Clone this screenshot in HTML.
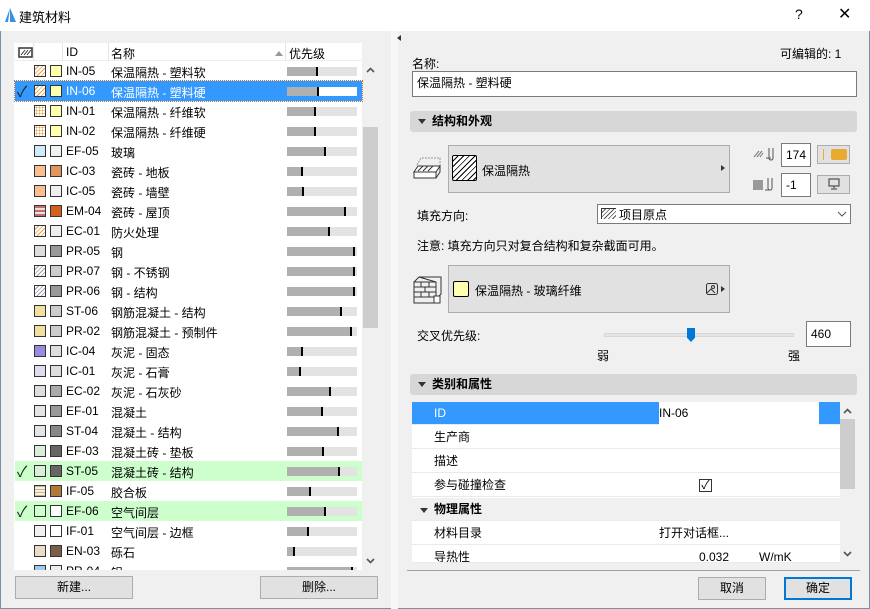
<!DOCTYPE html>
<html><head><meta charset="utf-8"><style>
*{box-sizing:border-box;margin:0;padding:0}
body{width:870px;height:609px;overflow:hidden;background:#f0f0f0;font-family:"Liberation Sans","Noto Sans CJK SC",sans-serif;font-size:12px;color:#000;position:relative}
.a{position:absolute}
.win{position:absolute;left:0;top:0;width:870px;height:609px;border:1px solid #7a8ea8;}
.row{position:absolute;left:15px;width:347px;height:20px}
.row span{position:absolute;top:3px;white-space:nowrap}
.s1,.s2{position:absolute;top:4px;width:12px;height:12px;border:1px solid #333}
.s1{left:19px}.s2{left:35px}
.bar{position:absolute;left:272px;top:6px;width:70px;height:9px;background:#e3e3e3}
.bar i{position:absolute;left:0;top:0;height:9px;background:#b0b0b0;border-right:2px solid #000}
.ck{left:2px;font-size:15px;top:0!important;color:#222}
.btn{position:absolute;background:#e1e1e1;border:1px solid #adadad;text-align:center;line-height:20px}
.hdr{position:absolute;left:410px;width:447px;height:21px;background:#d7d7d7;border-radius:3px;font-weight:bold;line-height:21px;padding-left:22px}
.hdr:before{content:"";position:absolute;left:8px;top:8px;border:4px solid transparent;border-top:5px solid #333}
.inp{position:absolute;background:#fff;border:1px solid #7a7a7a;line-height:22px;padding-left:4px}
.pr{position:absolute;left:412px;width:428px;height:23px;background:#fff;border-bottom:1px solid #eaeaea;line-height:23px}
.pr span{position:absolute}
</style></head><body>
<div class="win"></div>
<div class="a" style="left:0;top:0;width:870px;height:31px;background:#fff"></div>
<svg class="a" style="left:5px;top:8px" width="12" height="14"><path d="M5 0 L0 14 L11 14 Z" fill="#3a8ee6"/><path d="M5 0 L3 14 L5 14 Z" fill="#fff"/></svg>
<div class="a" style="left:19px;top:7px;font-size:13px">建筑材料</div>
<div class="a" style="left:795px;top:6px;font-size:14px">?</div>
<div class="a" style="left:838px;top:4px;font-size:16px">✕</div>
<div class="a" style="left:391px;top:31px;width:7px;height:578px;background:#f7f7f7"></div>
<div class="a" style="left:394px;top:35px;border:3px solid transparent;border-right:4px solid #333;width:0;height:0"></div>
<!-- list -->
<div class="a" style="left:14px;top:43px;width:348px;height:527px;background:#fff"></div>
<div class="a" style="left:14px;top:43px;width:348px;height:18px;background:#fff;border-bottom:1px solid #eee"></div>
<svg class="a" style="left:18px;top:47px" width="15" height="11"><rect x="1" y="1" width="13" height="9" fill="none" stroke="#333" stroke-width="1.5"/><path d="M3 8 L7 3 M6 8 L10 3 M9 8 L13 3" stroke="#333"/></svg>
<div class="a" style="left:33px;top:43px;width:1px;height:18px;background:#e5e5e5"></div>
<div class="a" style="left:62px;top:43px;width:1px;height:18px;background:#e5e5e5"></div>
<div class="a" style="left:108px;top:43px;width:1px;height:18px;background:#e5e5e5"></div>
<div class="a" style="left:285px;top:43px;width:1px;height:18px;background:#e5e5e5"></div>
<div class="a" style="left:66px;top:45px">ID</div>
<div class="a" style="left:111px;top:45px">名称</div>
<div class="a" style="left:275px;top:51px;border:4px solid transparent;border-bottom:5px solid #999;border-top:0"></div>
<div class="a" style="left:289px;top:45px">优先级</div>
<div class="a" style="left:363px;top:61px;width:15px;height:509px;background:#f0f0f0"></div>
<div class="a" style="left:363px;top:127px;width:15px;height:201px;background:#cdcdcd"></div>
<svg class="a" style="left:366px;top:67px" width="9" height="6"><path d="M1 5 L4.5 1.5 L8 5" fill="none" stroke="#555" stroke-width="1.6"/></svg>
<svg class="a" style="left:366px;top:558px" width="9" height="6"><path d="M1 1 L4.5 4.5 L8 1" fill="none" stroke="#555" stroke-width="1.6"/></svg>

<div class="row" style="top:61px"><div class="s1" style="background:repeating-linear-gradient(135deg,#fff 0 2px,#e8a040 2px 3px)"></div><div class="s2" style="background:#ffffb0"></div><span style="left:51px">IN-05</span><span style="left:96px">保温隔热 - 塑料软</span><div class="bar"><i style="width:31px"></i></div></div>
<div class="row" style="top:81px;background:#3399ff;color:#fff;outline:1px dotted #c07030"><span class="ck" style="color:#222">✓</span><div class="s1" style="background:repeating-linear-gradient(135deg,#fff 0 2px,#e8a040 2px 3px)"></div><div class="s2" style="background:#ffffb0"></div><span style="left:51px">IN-06</span><span style="left:96px">保温隔热 - 塑料硬</span><div class="bar" style="background:#fff"><i style="width:32px"></i></div></div>
<div class="row" style="top:101px"><div class="s1" style="background:radial-gradient(#e8a040 40%,#fff 45%) 0 0/3px 3px"></div><div class="s2" style="background:#ffffb0"></div><span style="left:51px">IN-01</span><span style="left:96px">保温隔热 - 纤维软</span><div class="bar"><i style="width:29px"></i></div></div>
<div class="row" style="top:121px"><div class="s1" style="background:radial-gradient(#e8a040 40%,#fff 45%) 0 0/3px 3px"></div><div class="s2" style="background:#ffffb0"></div><span style="left:51px">IN-02</span><span style="left:96px">保温隔热 - 纤维硬</span><div class="bar"><i style="width:29px"></i></div></div>
<div class="row" style="top:141px"><div class="s1" style="background:#cfeaf8"></div><div class="s2" style="background:#eef2ee"></div><span style="left:51px">EF-05</span><span style="left:96px">玻璃</span><div class="bar"><i style="width:39px"></i></div></div>
<div class="row" style="top:161px"><div class="s1" style="background:#f8c090"></div><div class="s2" style="background:#e0965e"></div><span style="left:51px">IC-03</span><span style="left:96px">瓷砖 - 地板</span><div class="bar"><i style="width:16px"></i></div></div>
<div class="row" style="top:181px"><div class="s1" style="background:#f8c090"></div><div class="s2" style="background:#eee"></div><span style="left:51px">IC-05</span><span style="left:96px">瓷砖 - 墙壁</span><div class="bar"><i style="width:17px"></i></div></div>
<div class="row" style="top:201px"><div class="s1" style="background:repeating-linear-gradient(0deg,#c07070 0 2px,#f0dede 2px 4px)"></div><div class="s2" style="background:#d2601f"></div><span style="left:51px">EM-04</span><span style="left:96px">瓷砖 - 屋顶</span><div class="bar"><i style="width:59px"></i></div></div>
<div class="row" style="top:221px"><div class="s1" style="background:repeating-linear-gradient(135deg,#fff 0 2px,#e8a040 2px 3px)"></div><div class="s2" style="background:#eee"></div><span style="left:51px">EC-01</span><span style="left:96px">防火处理</span><div class="bar"><i style="width:43px"></i></div></div>
<div class="row" style="top:241px"><div class="s1" style="background:#ddd"></div><div class="s2" style="background:#999"></div><span style="left:51px">PR-05</span><span style="left:96px">钢</span><div class="bar"><i style="width:68px"></i></div></div>
<div class="row" style="top:261px"><div class="s1" style="background:repeating-linear-gradient(135deg,#fff 0 2px,#99a 2px 3px)"></div><div class="s2" style="background:#ccc"></div><span style="left:51px">PR-07</span><span style="left:96px">钢 - 不锈钢</span><div class="bar"><i style="width:68px"></i></div></div>
<div class="row" style="top:281px"><div class="s1" style="background:repeating-linear-gradient(135deg,#fff 0 2px,#99a 2px 3px)"></div><div class="s2" style="background:#999"></div><span style="left:51px">PR-06</span><span style="left:96px">钢 - 结构</span><div class="bar"><i style="width:68px"></i></div></div>
<div class="row" style="top:301px"><div class="s1" style="background:#f0e0a0"></div><div class="s2" style="background:#ccc"></div><span style="left:51px">ST-06</span><span style="left:96px">钢筋混凝土 - 结构</span><div class="bar"><i style="width:55px"></i></div></div>
<div class="row" style="top:321px"><div class="s1" style="background:#f0e0a0"></div><div class="s2" style="background:#ccc"></div><span style="left:51px">PR-02</span><span style="left:96px">钢筋混凝土 - 预制件</span><div class="bar"><i style="width:65px"></i></div></div>
<div class="row" style="top:341px"><div class="s1" style="background:#9a8ae0"></div><div class="s2" style="background:#ddd"></div><span style="left:51px">IC-04</span><span style="left:96px">灰泥 - 固态</span><div class="bar"><i style="width:16px"></i></div></div>
<div class="row" style="top:361px"><div class="s1" style="background:#dde"></div><div class="s2" style="background:#ddd"></div><span style="left:51px">IC-01</span><span style="left:96px">灰泥 - 石膏</span><div class="bar"><i style="width:14px"></i></div></div>
<div class="row" style="top:381px"><div class="s1" style="background:#ddd"></div><div class="s2" style="background:#aaa"></div><span style="left:51px">EC-02</span><span style="left:96px">灰泥 - 石灰砂</span><div class="bar"><i style="width:44px"></i></div></div>
<div class="row" style="top:401px"><div class="s1" style="background:#e4e4e4"></div><div class="s2" style="background:#999"></div><span style="left:51px">EF-01</span><span style="left:96px">混凝土</span><div class="bar"><i style="width:36px"></i></div></div>
<div class="row" style="top:421px"><div class="s1" style="background:#e4e4e4"></div><div class="s2" style="background:#888"></div><span style="left:51px">ST-04</span><span style="left:96px">混凝土 - 结构</span><div class="bar"><i style="width:52px"></i></div></div>
<div class="row" style="top:441px"><div class="s1" style="background:#d8eed8"></div><div class="s2" style="background:#666"></div><span style="left:51px">EF-03</span><span style="left:96px">混凝土砖 - 垫板</span><div class="bar"><i style="width:37px"></i></div></div>
<div class="row" style="top:461px;background:#ccffcc"><span class="ck">✓</span><div class="s1" style="background:#d8eed8"></div><div class="s2" style="background:#666"></div><span style="left:51px">ST-05</span><span style="left:96px">混凝土砖 - 结构</span><div class="bar"><i style="width:53px"></i></div></div>
<div class="row" style="top:481px"><div class="s1" style="background:repeating-linear-gradient(0deg,#c8b890 0 1px,#f4efe0 1px 3px)"></div><div class="s2" style="background:#b07a3a"></div><span style="left:51px">IF-05</span><span style="left:96px">胶合板</span><div class="bar"><i style="width:24px"></i></div></div>
<div class="row" style="top:501px;background:#ccffcc"><span class="ck">✓</span><div class="s1" style="background:#ccffcc"></div><div class="s2" style="background:#fff"></div><span style="left:51px">EF-06</span><span style="left:96px">空气间层</span><div class="bar"><i style="width:39px"></i></div></div>
<div class="row" style="top:521px"><div class="s1" style="background:#f0f0f0"></div><div class="s2" style="background:#fff"></div><span style="left:51px">IF-01</span><span style="left:96px">空气间层 - 边框</span><div class="bar"><i style="width:22px"></i></div></div>
<div class="row" style="top:541px"><div class="s1" style="background:#e8dcc8"></div><div class="s2" style="background:#7a5e45"></div><span style="left:51px">EN-03</span><span style="left:96px">砾石</span><div class="bar"><i style="width:8px"></i></div></div>
<div class="row" style="top:561px;height:9px;overflow:hidden"><div class="s1" style="background:#a0c8f0"></div><div class="s2" style="background:#eee"></div><span style="left:51px">PR-04</span><span style="left:96px">铝</span><div class="bar"><i style="width:66px"></i></div></div>

<div class="btn" style="left:15px;top:576px;width:118px;height:23px">新建...</div>
<div class="btn" style="left:260px;top:576px;width:118px;height:23px">删除...</div>

<!-- right -->
<div class="a" style="left:412px;top:55px">名称:</div>
<div class="a" style="left:780px;top:45px">可编辑的: 1</div>
<div class="inp" style="left:412px;top:71px;width:445px;height:26px">保温隔热 - 塑料硬</div>
<div class="hdr" style="top:111px">结构和外观</div>
<svg class="a" style="left:413px;top:157px" width="28" height="26"><path d="M4 8 L8 1 L27 1 L27 10" fill="none" stroke="#999" stroke-dasharray="2 1"/><path d="M1 15 L5 9 L27 9 L23 15 Z" fill="#fff" stroke="#333"/><path d="M5 14 L10 9 M10 14 L15 9 M15 14 L20 9" stroke="#333"/><rect x="1" y="15" width="22" height="6" fill="#fff" stroke="#333"/><path d="M23 21 L27 15 L27 9" fill="none" stroke="#333"/></svg>
<div class="a" style="left:448px;top:145px;width:282px;height:48px;background:#e1e1e1;border:1px solid #adadad"></div>
<div class="a" style="left:452px;top:155px;width:25px;height:26px;border:1px solid #000;border-radius:2px;background:repeating-linear-gradient(135deg,#fff 0 3px,#000 3px 4px)"></div>
<div class="a" style="left:482px;top:162px">保温隔热</div>
<div class="a" style="left:721px;top:165px;border:3px solid transparent;border-left:4px solid #333"></div>
<svg class="a" style="left:753px;top:146px" width="24" height="16"><path d="M1 11 L6 5 M4 11 L9 5 M7 11 L10 7" stroke="#777"/><path d="M13 12 H18 M16 2 V12 Q16 14 18 14 Q20 14 20 12 V2" fill="none" stroke="#555"/></svg>
<div class="inp" style="left:781px;top:143px;width:30px;height:24px;line-height:22px">174</div>
<div class="a" style="left:817px;top:145px;width:33px;height:19px;background:#e1e1e1;border:1px solid #adadad"></div>
<div class="a" style="left:831px;top:149px;width:16px;height:11px;background:#e8aa30;border-radius:2px"></div>
<div class="a" style="left:823px;top:149px;width:1px;height:11px;background:#e8aa30"></div>
<div class="a" style="left:753px;top:180px;width:10px;height:10px;background:#999"></div>
<svg class="a" style="left:765px;top:176px" width="10" height="16"><path d="M0 14 H6 M3 2 V12 Q3 14 5 14 Q7 14 7 12 V2" fill="none" stroke="#555"/></svg>
<div class="inp" style="left:781px;top:173px;width:30px;height:24px;line-height:22px">-1</div>
<div class="a" style="left:817px;top:175px;width:33px;height:19px;background:#e1e1e1;border:1px solid #adadad"></div>
<svg class="a" style="left:828px;top:178px" width="12" height="12"><rect x="1" y="1" width="10" height="7" fill="none" stroke="#333"/><path d="M6 8 V10 M3 11 H9" stroke="#333"/></svg>
<div class="a" style="left:417px;top:207px">填充方向:</div>
<div class="a" style="left:597px;top:204px;width:254px;height:20px;background:#fff;border:1px solid #7a7a7a"></div>
<div class="a" style="left:601px;top:208px;width:15px;height:11px;border-left:1px solid #333;border-top:1px solid #333;background:repeating-linear-gradient(135deg,#fff 0 2px,#555 2px 3px)"></div>
<div class="a" style="left:619px;top:206px">项目原点</div>
<svg class="a" style="left:837px;top:211px" width="10" height="6"><path d="M1 1 L5 5 L9 1" fill="none" stroke="#555"/></svg>
<div class="a" style="left:417px;top:237px">注意: 填充方向只对复合结构和复杂截面可用。</div>
<svg class="a" style="left:413px;top:276px" width="30" height="28"><path d="M1 6 L6 1 L28 1 L28 18 L23 23" fill="none" stroke="#333"/><rect x="1" y="6" width="22" height="21" fill="none" stroke="#333"/><path d="M1 11 H23 M1 16 H23 M1 21 H23 M8 6 V11 M16 6 V11 M12 11 V16 M8 16 V21 M16 16 V21 M6 1 L23 6" stroke="#333" fill="none"/><rect x="21" y="20" width="6" height="7" fill="#fff" stroke="#333"/></svg>
<div class="a" style="left:448px;top:265px;width:282px;height:48px;background:#e1e1e1;border:1px solid #adadad"></div>
<div class="a" style="left:453px;top:281px;width:16px;height:16px;background:#ffffb0;border:1px solid #000;border-radius:2px"></div>
<div class="a" style="left:475px;top:282px">保温隔热 - 玻璃纤维</div>
<svg class="a" style="left:706px;top:283px" width="12" height="12"><rect x="0.5" y="0.5" width="11" height="11" rx="2" fill="none" stroke="#333"/><circle cx="7" cy="4" r="1.5" fill="none" stroke="#333"/><path d="M1 10 L5 6 L9 10" fill="none" stroke="#333"/></svg>
<div class="a" style="left:721px;top:286px;border:3px solid transparent;border-left:4px solid #333"></div>
<div class="a" style="left:417px;top:327px">交叉优先级:</div>
<div class="a" style="left:604px;top:333px;width:190px;height:4px;background:#e6e6e6;border:1px solid #d6d6d6"></div>
<div class="a" style="left:687px;top:328px;width:8px;height:14px;background:#0078d7;clip-path:polygon(0 0,100% 0,100% 70%,50% 100%,0 70%)"></div>
<div class="inp" style="left:806px;top:321px;width:45px;height:26px;line-height:24px">460</div>
<div class="a" style="left:597px;top:347px">弱</div>
<div class="a" style="left:788px;top:347px">强</div>
<div class="hdr" style="top:374px">类别和属性</div>
<div class="a" style="left:412px;top:402px;width:428px;height:161px;background:#fff;overflow:hidden"></div>
<div class="pr" style="top:402px;background:#3399ff;color:#fff"><span style="left:22px">ID</span><span style="left:247px;top:0;width:160px;height:23px;background:#fff;color:#000">IN-06</span></div>
<div class="pr" style="top:426px"><span style="left:22px">生产商</span></div>
<div class="pr" style="top:450px"><span style="left:22px">描述</span></div>
<div class="pr" style="top:474px"><span style="left:22px">参与碰撞检查</span><span style="left:287px;top:5px;width:13px;height:13px;border:1px solid #333;line-height:11px;font-size:12px;text-align:center">✓</span></div>
<div class="pr" style="top:498px;background:#f0f0f0;font-weight:bold"><span style="left:22px">物理属性</span><span style="left:8px;top:10px;border:4px solid transparent;border-top:5px solid #333"></span></div>
<div class="pr" style="top:522px"><span style="left:22px">材料目录</span><span style="left:247px">打开对话框...</span></div>
<div class="pr" style="top:546px;height:17px;overflow:hidden"><span style="left:22px">导热性</span><span style="left:287px">0.032</span><span style="left:347px">W/mK</span></div>
<div class="a" style="left:840px;top:402px;width:15px;height:161px;background:#f0f0f0"></div>
<div class="a" style="left:840px;top:419px;width:15px;height:70px;background:#cdcdcd"></div>
<svg class="a" style="left:843px;top:408px" width="9" height="6"><path d="M1 5 L4.5 1.5 L8 5" fill="none" stroke="#555" stroke-width="1.6"/></svg>
<svg class="a" style="left:843px;top:551px" width="9" height="6"><path d="M1 1 L4.5 4.5 L8 1" fill="none" stroke="#555" stroke-width="1.6"/></svg>
<div class="a" style="left:407px;top:570px;width:453px;height:1px;background:#a0a0a0"></div>
<div class="btn" style="left:698px;top:577px;width:68px;height:23px">取消</div>
<div class="btn" style="left:784px;top:577px;width:68px;height:23px;border:2px solid #0078d7;line-height:19px">确定</div>
</body></html>
